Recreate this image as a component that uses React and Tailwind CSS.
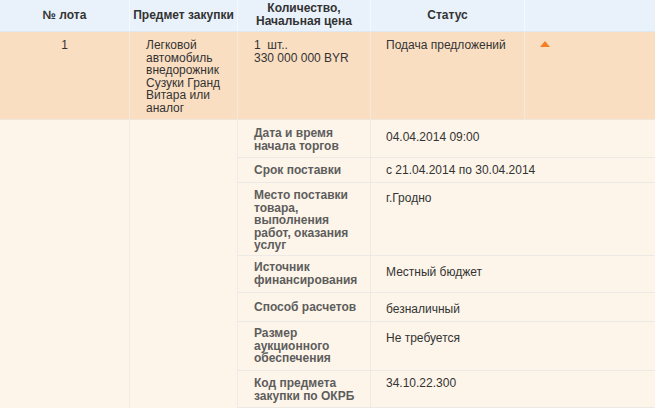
const font = { fontFamily: '"Liberation Sans", Arial, sans-serif' }

const details = [
  { label: 'Дата и время начала торгов', value: '04.04.2014 09:00', h: 'h-[38px]', lp: 'pt-[7px]', vp: 'pt-[11px]' },
  { label: 'Срок поставки', value: 'с 21.04.2014 по 30.04.2014', h: 'h-[25px]', lp: 'pt-[6px]', vp: 'pt-[6px]' },
  { label: 'Место поставки товара, выполнения работ, оказания услуг', value: 'г.Гродно', h: 'h-[73px]', lp: 'pt-[6px]', vp: 'pt-[9px]' },
  { label: 'Источник финансирования', value: 'Местный бюджет', h: 'h-[37px]', lp: 'pt-[5px]', vp: 'pt-[10px]' },
  { label: 'Способ расчетов', value: 'безналичный', h: 'h-[29px]', lp: 'pt-[8px]', vp: 'pt-[10px]' },
  { label: 'Размер аукционного обеспечения', value: 'Не требуется', h: 'h-[49px]', lp: 'pt-[5px]', vp: 'pt-[10px]' },
  { label: 'Код предмета закупки по ОКРБ', value: '34.10.22.300', h: 'h-[37px]', lp: 'pt-[6px]', vp: 'pt-[6px]' },
]

export default function App() {
  return (
    <div className="w-[655px] h-[408px] overflow-hidden bg-white text-[12px] leading-[12.5px]" style={font}>
      {/* Header */}
      <div className="grid grid-cols-[130px_108px_133px_154px_130px] h-[32px] bg-[#e9f2fb] border-b border-[#dde8f2] font-bold text-[#333]">
        <div className="border-r border-[#f5f9fd] flex items-center justify-center">№ лота</div>
        <div className="border-r border-[#f5f9fd] flex items-center justify-center">Предмет закупки</div>
        <div className="border-r border-[#f5f9fd] flex items-center justify-center text-center pb-[2px]">
          Количество,<br />Начальная цена
        </div>
        <div className="border-r border-[#f5f9fd] flex items-center justify-center">Статус</div>
        <div />
      </div>

      {/* Lot row */}
      <div className="grid grid-cols-[130px_108px_133px_154px_130px] h-[88px] bg-[#fadec2] border-b border-[#f1e6da] text-[#333]">
        <div className="border-r border-[#f2e9e0] pt-[7px] text-center">1</div>
        <div className="border-r border-[#f2e9e0] pt-[7px] pl-[16px] pr-[8px]">
          Легковой автомобиль внедорожник Сузуки Гранд Витара или аналог
        </div>
        <div className="border-r border-[#f2e9e0] pt-[7px] pl-[16px]">
          1&nbsp; шт..<br />330 000 000 BYR
        </div>
        <div className="border-r border-[#f2e9e0] pt-[7px] pl-[15px]">Подача предложений</div>
        <div className="pt-[9px] pl-[15px]">
          <svg width="10" height="6" viewBox="0 0 10 6">
            <path d="M5 0 L10 6 L0 6 Z" fill="#f47f24" />
          </svg>
        </div>
      </div>

      {/* Details */}
      <div className="grid grid-cols-[130px_108px_1fr] bg-[#fdf5e9]">
        <div className="border-r border-[#efebe6]" />
        <div className="border-r border-[#efebe6]" />
        <div>
          {details.map((d) => (
            <div key={d.label} className={`grid grid-cols-[133px_1fr] border-b border-[#ede9e4] ${d.h}`}>
              <div className={`border-r border-[#ede9e4] pl-[16px] pr-[4px] font-bold text-[#5d5d5d] ${d.lp}`}>
                {d.label}
              </div>
              <div className={`pl-[15px] text-[#333] ${d.vp}`}>{d.value}</div>
            </div>
          ))}
        </div>
      </div>
    </div>
  )
}
